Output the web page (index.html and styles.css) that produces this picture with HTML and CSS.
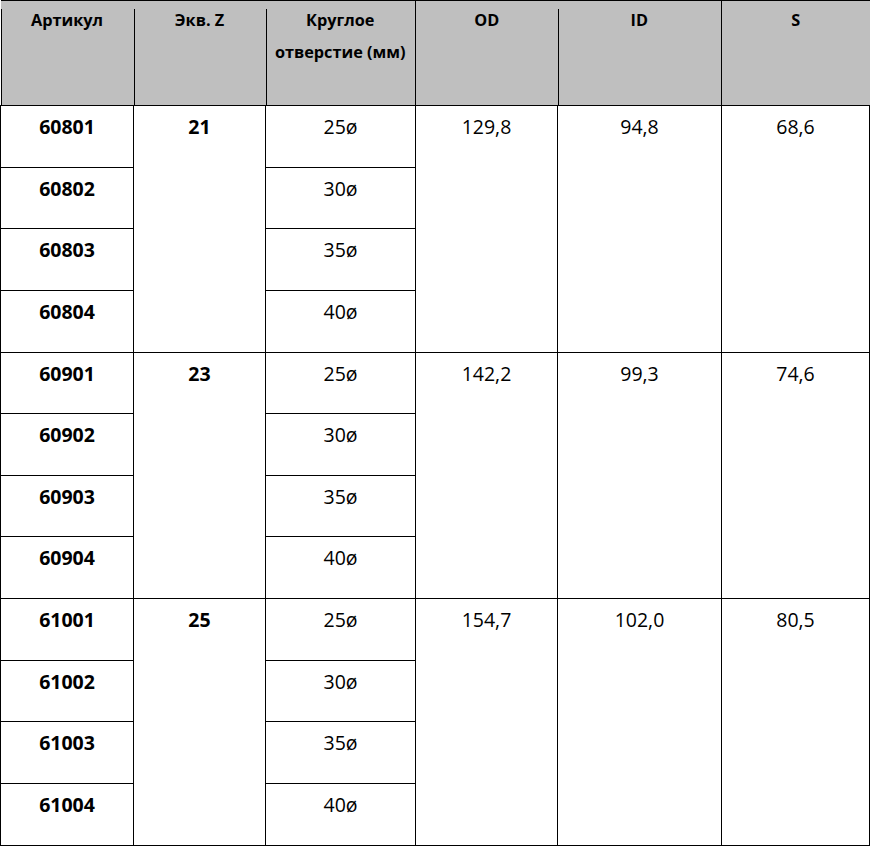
FILE: index.html
```html
<!DOCTYPE html>
<html lang="ru">
<head>
<meta charset="utf-8">
<title>Таблица</title>
<link rel="stylesheet" href="styles.css">
</head>
<body>
<table class="spec">
  <colgroup>
    <col class="c1"><col class="c2"><col class="c3"><col class="c4"><col class="c5"><col class="c6">
  </colgroup>
  <thead>
    <tr class="head">
      <th class="gap first">Артикул</th>
      <th class="gap">Экв. Z</th>
      <th class="gap">Круглое отверстие (мм)</th>
      <th>OD</th>
      <th class="gap">ID</th>
      <th class="last">S</th>
    </tr>
  </thead>
  <tbody>
    <tr><td class="b">60801</td><td class="b" rowspan="4">21</td><td>25ø</td><td rowspan="4">129,8</td><td rowspan="4">94,8</td><td rowspan="4">68,6</td></tr>
    <tr><td class="b">60802</td><td>30ø</td></tr>
    <tr><td class="b">60803</td><td>35ø</td></tr>
    <tr><td class="b">60804</td><td>40ø</td></tr>
    <tr><td class="b">60901</td><td class="b" rowspan="4">23</td><td>25ø</td><td rowspan="4">142,2</td><td rowspan="4">99,3</td><td rowspan="4">74,6</td></tr>
    <tr><td class="b">60902</td><td>30ø</td></tr>
    <tr><td class="b">60903</td><td>35ø</td></tr>
    <tr><td class="b">60904</td><td>40ø</td></tr>
    <tr><td class="b">61001</td><td class="b" rowspan="4">25</td><td>25ø</td><td rowspan="4">154,7</td><td rowspan="4">102,0</td><td rowspan="4">80,5</td></tr>
    <tr><td class="b">61002</td><td>30ø</td></tr>
    <tr><td class="b">61003</td><td>35ø</td></tr>
    <tr><td class="b">61004</td><td>40ø</td></tr>
  </tbody>
</table>
</body>
</html>
```
FILE: styles.css
```css
html, body {
  margin: 0;
  padding: 0;
  background: #ffffff;
}

.spec {
  border-collapse: collapse;
  table-layout: fixed;
  width: 869px;
  font-family: "Open Sans", "Noto Sans", sans-serif;
  color: #000;
}

.c1 { width: 133px; }
.c2 { width: 132px; }
.c3 { width: 150px; }
.c4 { width: 142px; }
.c5 { width: 164px; }
.c6 { width: 148px; }

.spec th,
.spec td {
  border: 1px solid #000;
  text-align: center;
  vertical-align: top;
  padding: 0;
}

.spec .head {
  height: 105px;
}

.head th {
  background-color: #bfbfbf;
  font-size: 16.3px;
  font-weight: 700;
  line-height: 32px;
  padding: 3px 4px 0;
}

.head th.gap {
  border-left-style: hidden;
  background-image: linear-gradient(#000, #000);
  background-position: 0 8px;
  background-size: 1px 100%;
  background-repeat: no-repeat;
}

.head th.last {
  border-right-style: hidden;
}

.spec tbody tr {
  height: 61.64px;
}

.spec td {
  font-size: 19.5px;
  line-height: 32px;
  padding-top: 5px;
  font-weight: 400;
}

.spec td.b {
  font-weight: 700;
}
```
